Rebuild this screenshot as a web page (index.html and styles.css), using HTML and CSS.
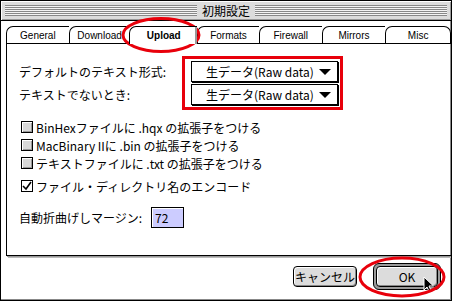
FILE: index.html
```html
<!DOCTYPE html>
<html lang="ja">
<head>
  <meta charset="UTF-8">
  <title>初期設定</title>
  <link rel="stylesheet" href="styles.css">
</head>
<body>

<div class="window">
  <div class="titlebar">
    <span class="stripes"></span>
    <span class="title">初期設定</span>
    <span class="stripes"></span>
  </div>

  <div class="content">
    <div class="tabs">
      <span class="tab" style="width:62px">General</span>
      <span class="tab" style="width:60px">Download</span>
      <span class="tab selected" style="width:67px">Upload</span>
      <span class="tab" style="width:61px">Formats</span>
      <span class="tab" style="width:62px">Firewall</span>
      <span class="tab" style="width:63px">Mirrors</span>
      <span class="tab last" style="width:64px">Misc</span>
    </div>

    <div class="panel">
      <div class="formats">
        <span class="label">デフォルトのテキスト形式:</span>
        <span class="popup">生データ(Raw data)<span class="arrow"></span></span>
        <span class="label">テキストでないとき:</span>
        <span class="popup">生データ(Raw data)<span class="arrow"></span></span>
      </div>

      <div class="checks">
        <div class="check"><span class="box"></span>BinHexファイルに .hqx の拡張子をつける</div>
        <div class="check"><span class="box"></span>MacBinary IIに .bin の拡張子をつける</div>
        <div class="check"><span class="box"></span>テキストファイルに .txt の拡張子をつける</div>
      </div>

      <div class="check encode">
        <span class="box checked">
          <svg width="10" height="10" viewBox="0 0 10 10"><path d="M1 5 L4 8 L9 1" fill="none" stroke="#000" stroke-width="1.6"/></svg>
        </span>ファイル・ディレクトリ名のエンコード
      </div>

      <div class="margin">
        <span>自動折曲げしマージン:</span>
        <span class="field">72</span>
      </div>
    </div>

    <div class="buttons">
      <span class="button">キャンセル</span>
      <span class="default"><span class="button ok">OK</span></span>
    </div>
  </div>

  <svg class="cursor" width="12" height="18" viewBox="0 0 12 18">
    <path d="M1 1 L1 14 L4 11 L6.5 16.5 L8.5 15.5 L6 10 L10.5 10 Z" fill="#000" stroke="#fff" stroke-width="1"/>
  </svg>

  <svg class="marks" width="452" height="301" viewBox="0 0 452 301">
    <ellipse cx="161" cy="35" rx="38" ry="16.5" fill="none" stroke="#e8000b" stroke-width="3"/>
    <rect x="183.5" y="57.5" width="158" height="51" fill="none" stroke="#e8000b" stroke-width="3"/>
    <ellipse cx="402" cy="277" rx="42" ry="19" fill="none" stroke="#e8000b" stroke-width="3"/>
  </svg>
</div>

</body>
</html>
```

FILE: styles.css
```css
body {
  margin: 0;
  font-family: "Noto Sans CJK JP", sans-serif;
  font-size: 12px;
  color: #000;
}
.window {
  position: relative;
  width: 452px;
  height: 301px;
  box-sizing: border-box;
  border: 1px solid #000;
  background: #fff;
  box-shadow: inset -1px -1px 0 #888;
  overflow: hidden;
}
.titlebar {
  display: flex;
  align-items: center;
  height: 19px;
  padding: 0 4px;
  background: #dcdcdc;
  border-bottom: 1px solid #000;
  box-shadow: inset 1px 1px 0 #fff, inset -1px -1px 0 #999;
}
.stripes {
  flex: 1;
  height: 11px;
  background: repeating-linear-gradient(#888 0 1px, #f4f4f4 1px 2px);
}
.title {
  padding: 0 5px;
  line-height: 19px;
}
.content {
  padding: 5px 0 0 5px;
}
.tabs {
  display: flex;
  font-family: "Liberation Sans", sans-serif;
  font-size: 10px;
}
.tab {
  height: 16px;
  line-height: 17px;
  text-align: center;
  border: 1px solid #000;
  border-right: none;
  border-bottom: none;
  border-radius: 7px 0 0 0;
  background: #fff;
}
.tab.last {
  border-right: 1px solid #000;
  border-radius: 7px 7px 0 0;
}
.tab.selected {
  font-weight: bold;
  position: relative;
  z-index: 1;
  height: 17px;
  margin-bottom: -1px;
  box-shadow: inset -2px 0 0 #999;
}
.panel {
  width: 437px;
  height: 211px;
  border: 1px solid #000;
  box-shadow: 1px 1px 0 #999, 2px 2px 0 #bbb;
  padding: 0 0 0 12px;
  box-sizing: content-box;
}
.formats {
  display: grid;
  grid-template-columns: 172px 147px;
  row-gap: 2px;
  margin-top: 17px;
  align-items: center;
}
.popup {
  position: relative;
  height: 19px;
  line-height: 19px;
  padding-left: 14px;
  border: 1px solid #000;
  box-shadow: 1px 1px 0 #000;
}
.arrow {
  position: absolute;
  right: 6px;
  top: 7px;
  border-left: 6px solid transparent;
  border-right: 6px solid transparent;
  border-top: 6px solid #000;
}
.checks {
  margin-top: 13px;
}
.check {
  display: flex;
  align-items: center;
  height: 18px;
  padding-left: 2px;
}
.box {
  display: inline-flex;
  align-items: center;
  justify-content: center;
  width: 10px;
  height: 10px;
  margin-right: 3px;
  border: 1px solid #000;
  background: #d8d8d8;
  box-shadow: inset 1px 1px 0 #fff, inset -1px -1px 0 #999;
}
.box.checked {
  background: #fff;
  box-shadow: none;
}
.encode {
  margin-top: 5px;
}
.margin {
  display: flex;
  align-items: center;
  gap: 9px;
  margin-top: 12px;
}
.field {
  width: 28px;
  height: 19px;
  line-height: 19px;
  padding-left: 3px;
  border: 1px solid #000;
  background: #ccccff;
  box-shadow: inset 1px 1px 0 #fff;
}
.buttons {
  display: flex;
  justify-content: flex-end;
  align-items: center;
  gap: 16px;
  margin-top: 7px;
  padding-right: 10px;
}
.button {
  display: inline-block;
  height: 19px;
  line-height: 19px;
  padding: 0 1px;
  border: 1px solid #000;
  border-radius: 4px;
  background: #dcdcdc;
  box-shadow: inset 1px 1px 0 #fff, inset -1px -1px 0 #888;
  text-align: center;
}
.default {
  display: inline-block;
  padding: 2px;
  border: 1px solid #000;
  border-radius: 6px;
  background: #9a9a9a;
}
.ok {
  width: 58px;
}
.cursor {
  position: absolute;
  left: 422px;
  top: 275px;
}
.marks {
  position: absolute;
  left: -1px;
  top: -1px;
  pointer-events: none;
}
```
